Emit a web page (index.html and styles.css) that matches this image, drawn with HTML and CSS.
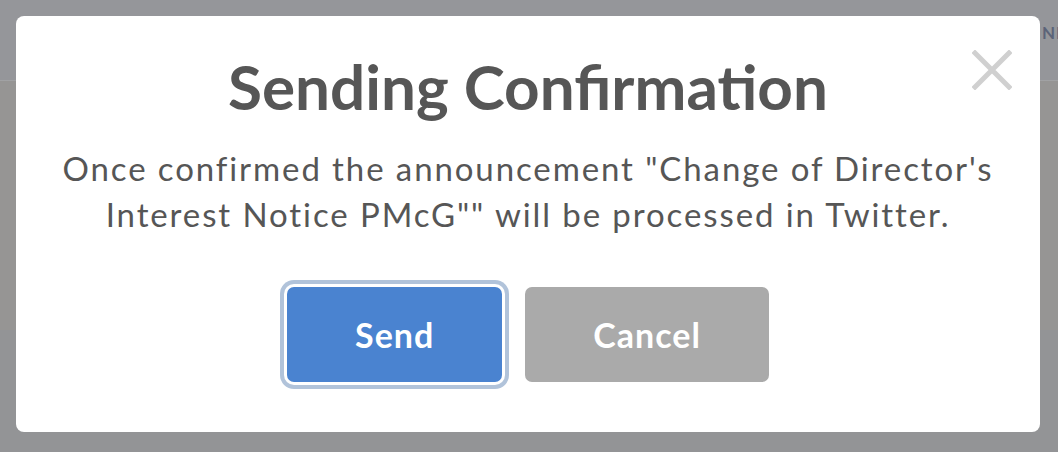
FILE: index.html
```html
<!DOCTYPE html>
<html lang="en">
<head>
<meta charset="utf-8">
<title>Sending Confirmation</title>
<link rel="stylesheet" href="styles.css">
</head>
<body>
<div class="page">
  <header class="topbar">
    <nav class="nav"><span class="nav-item">NEWS</span></nav>
  </header>
  <main class="content"></main>
  <footer class="foot"></footer>
</div>
<div class="overlay">
  <div class="modal" role="dialog">
    <button class="close" aria-label="Close">
      <svg viewBox="0 0 40 40" width="40" height="40"><path d="M3 3 L37 37 M37 3 L3 37" stroke="#d0d0d0" stroke-width="5" stroke-linecap="square" fill="none"/></svg>
    </button>
    <h1 class="title">Sending Confirmation</h1>
    <p class="message">Once confirmed the announcement "Change of Director's Interest Notice PMcG"" will be processed in Twitter.</p>
    <div class="actions">
      <button class="btn btn-send">Send</button>
      <button class="btn btn-cancel">Cancel</button>
    </div>
  </div>
</div>
</body>
</html>
```
FILE: styles.css
```css
html, body {
  margin: 0;
  padding: 0;
}
body {
  width: 1058px;
  height: 452px;
  overflow: hidden;
  font-family: Lato, "Noto Sans", sans-serif;
  background: #939496;
}
.page {
  display: flex;
  flex-direction: column;
  height: 452px;
}
.topbar {
  height: 80px;
  background: #95969a;
  border-bottom: 1px solid #a1a2a4;
  display: flex;
  justify-content: flex-end;
  overflow: hidden;
}
.nav {
  display: flex;
  width: 16px;
  flex: none;
  padding-top: 22px;
}
.nav-item {
  font-size: 17px;
  font-weight: 700;
  color: #5b6378;
  white-space: nowrap;
  letter-spacing: 1px;
}
.content {
  height: 249px;
  background: #969594;
}
.foot {
  flex: 1;
  background: #939496;
}
.overlay {
  position: absolute;
  inset: 0;
  padding: 16px 18px 20px 16px;
  box-sizing: border-box;
}
.modal {
  position: relative;
  background: #ffffff;
  border-radius: 8px;
  height: 100%;
  box-sizing: border-box;
  padding-top: 34px;
  text-align: center;
  color: #565656;
}
.close {
  position: absolute;
  top: 34px;
  right: 28px;
  width: 40px;
  height: 40px;
  padding: 0;
  border: 0;
  background: none;
}
.close svg { display: block; }
.title {
  margin: 0;
  font-size: 62px;
  line-height: 72px;
  font-weight: 700;
  color: #565656;
}
.message {
  margin: 23px 40px 0;
  font-size: 33px;
  line-height: 46px;
  letter-spacing: 1.9px;
  color: #565656;
}
.actions {
  display: flex;
  justify-content: center;
  gap: 23px;
  margin-top: 50px;
}
.btn {
  font-family: inherit;
  font-size: 34px;
  font-weight: 700;
  letter-spacing: 1px;
  color: #ffffff;
  border: 0;
  border-radius: 7px;
  height: 95px;
  padding: 0 68px;
}
.btn-send {
  background: #4a83d0;
  box-shadow: 0 0 0 3px #ffffff, 0 0 0 7px #b1c3da;
}
.btn-cancel {
  background: #aaaaaa;
}
```
